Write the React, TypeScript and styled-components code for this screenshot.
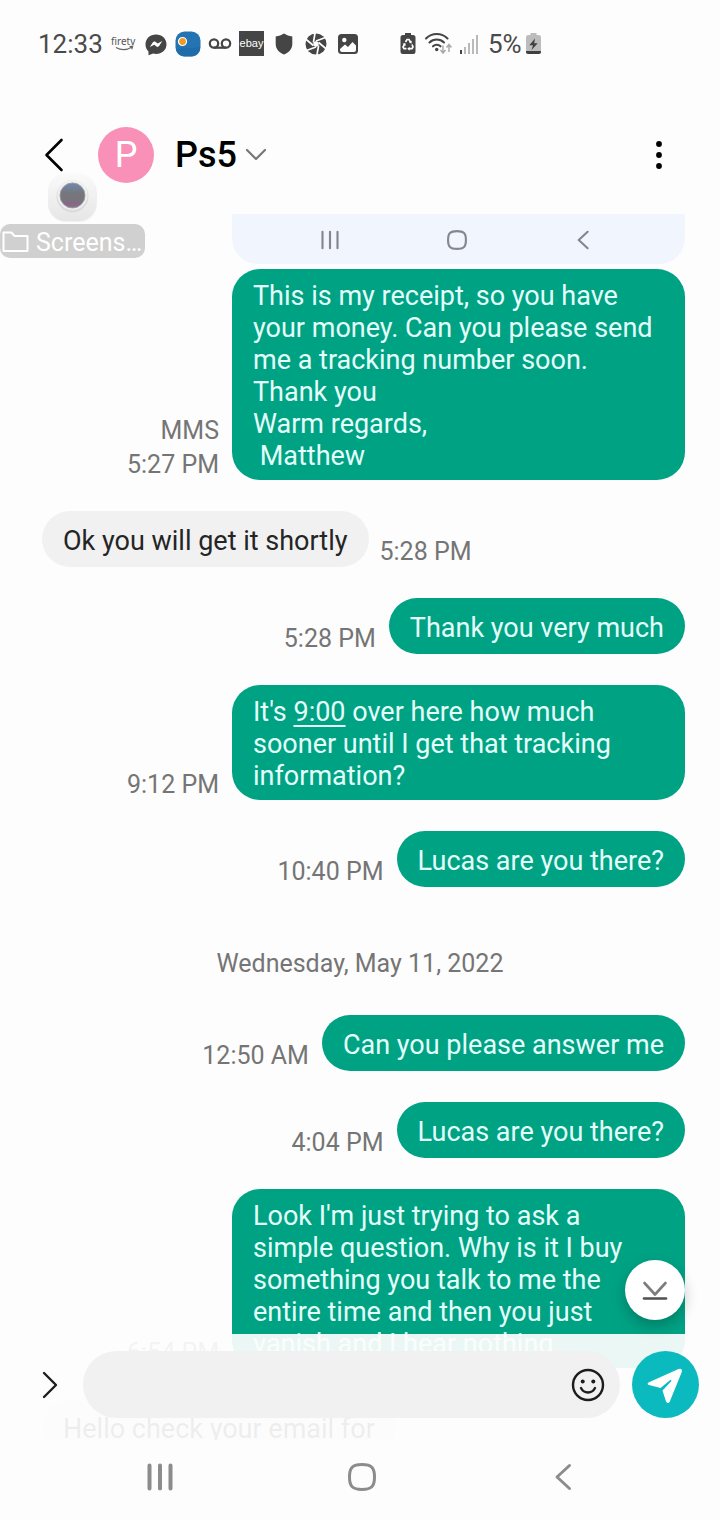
import React from "react";
import styled, { createGlobalStyle, css } from "styled-components";

const GlobalStyle = createGlobalStyle`
  *, *::before, *::after { box-sizing: border-box; }
  body { margin: 0; background: #fdfdfd; font-family: Roboto, "Noto Sans", sans-serif; }
  button { font: inherit; }
`;

const Screen = styled.div`
  position: relative;
  display: flex;
  flex-direction: column;
  height: 100vh;
  overflow: hidden;
  background: #fdfdfd;
  color: #000;
`;

const StatusBar = styled.div`
  flex: none;
  display: flex;
  align-items: center;
  height: 88px;
  padding: 0 38px;
  color: #4a4a4a;
`;

const Clock = styled.time`
  width: 74px;
  font-size: 26px;
  line-height: 32px;
`;

const Notifications = styled.div`
  display: flex;
  gap: 8px;
  flex: none;
  width: 288px;
`;

const SystemIcons = styled.div`
  display: flex;
  align-items: center;
  gap: 8px;
`;

const Battery = styled.span`
  display: flex;
  align-items: center;
  gap: 4px;
  font-size: 26px;
  line-height: 32px;
`;

const Header = styled.header`
  flex: none;
  display: flex;
  align-items: center;
  height: 126px;
  padding: 8px 37px 0;
`;

const IconButton = styled.button<{ $width?: number }>`
  display: flex;
  flex: none;
  align-items: center;
  justify-content: center;
  width: ${(p) => p.$width ?? 44}px;
  height: 48px;
  padding: 0;
  border: 0;
  background: none;
  color: inherit;
  cursor: pointer;
`;

const Avatar = styled.div`
  display: flex;
  flex: none;
  align-items: center;
  justify-content: center;
  width: 56px;
  height: 56px;
  margin: 0 21px 0 24px;
  border-radius: 50%;
  background: #f890b7;
  color: #fff;
  font-size: 36px;
`;

const Title = styled.h1`
  margin: 0;
  font-size: 36px;
  line-height: 44px;
  font-weight: 500;
`;

const Spacer = styled.div`
  flex: 1;
`;

const Conversation = styled.main`
  position: relative;
  flex: 1;
  min-height: 0;
  overflow: hidden;
`;

const Thread = styled.div`
  display: flex;
  flex-direction: column;
  gap: 31px;
  padding: 0 35px 0 42px;
`;

const Attachment = styled.div`
  display: flex;
  align-items: center;
  justify-content: space-between;
  align-self: flex-end;
  width: 453px;
  max-width: 100%;
  height: 50px;
  margin-bottom: -26px;
  padding: 2px 92px 0 88px;
  border-radius: 0 0 26px 26px;
  background: #f1f5fe;
  color: #85878e;
`;

const MessageRow = styled.div<{ $sent: boolean }>`
  display: flex;
  align-items: flex-end;
  flex-direction: ${(p) => (p.$sent ? "row-reverse" : "row")};
  gap: ${(p) => (p.$sent ? 13 : 11)}px;
`;

const Bubble = styled.p<{ $sent: boolean }>`
  display: flex;
  align-items: center;
  max-width: 453px;
  min-height: 56px;
  margin: 0;
  padding: 11px 21px 8px;
  border-radius: 28px;
  font-size: 27px;
  line-height: 32px;
  white-space: pre-wrap;
  ${(p) =>
    p.$sent
      ? css`
          background: #00a284;
          color: #e4fffa;
        `
      : css`
          background: #f1f1f1;
          color: #252525;
        `}
`;

const TimeLink = styled.a`
  color: inherit;
  text-decoration: underline;
  text-decoration-thickness: 2px;
  text-underline-offset: 4px;
`;

const Meta = styled.span<{ $sent: boolean }>`
  flex: none;
  margin-bottom: -2px;
  font-size: 25px;
  line-height: 34px;
  color: #757575;
  text-align: ${(p) => (p.$sent ? "right" : "left")};
  white-space: pre-line;
`;

const DateDivider = styled.div`
  padding-top: 26px;
  margin-right: 7px;
  align-self: center;
  font-size: 25px;
  line-height: 32px;
  height: 66px;
  display: flex;
  align-items: center;
  color: #757575;
`;

const Composer = styled.form`
  position: absolute;
  right: 0;
  bottom: 0;
  left: 0;
  display: flex;
  align-items: flex-start;
  height: 106px;
  padding: 17px 21px 0 28px;
  background: rgba(253, 253, 253, 0.93);
  color: #1d1d1d;
`;

const ExpandButton = styled(IconButton)`
  height: 67px;
  margin-right: 11px;
`;

const Field = styled.div`
  display: flex;
  flex: 1;
  align-items: center;
  min-width: 0;
  height: 67px;
  margin-right: 12px;
  padding: 0 10px 0 32px;
  border-radius: 34px;
  background: #f1f1f1;
`;

const TextInput = styled.input`
  flex: 1;
  min-width: 0;
  border: 0;
  outline: 0;
  background: none;
  font: 27px/32px Roboto, sans-serif;
`;

const SendButton = styled.button`
  display: flex;
  flex: none;
  align-items: center;
  justify-content: center;
  width: 67px;
  height: 67px;
  padding: 0;
  border: 0;
  border-radius: 50%;
  background: #0bbabe;
  cursor: pointer;
`;

const JumpButton = styled.button`
  position: absolute;
  right: 35px;
  bottom: 120px;
  display: flex;
  align-items: center;
  justify-content: center;
  width: 60px;
  height: 60px;
  padding: 0;
  border: 0;
  border-radius: 50%;
  background: #fff;
  box-shadow: 0 6px 14px rgba(0, 0, 0, 0.22);
  cursor: pointer;
`;

const SystemNav = styled.nav`
  flex: none;
  display: flex;
  align-items: center;
  justify-content: space-between;
  height: 80px;
  padding: 0 135px 7px 138px;
  color: #8c8c8c;
`;

const DragPreview = styled.div`
  position: absolute;
  top: 172px;
  left: 0;
`;

const CameraTile = styled.div`
  width: 60px;
  height: 52px;
  margin-left: 42px;
`;

const FolderLabel = styled.div`
  display: flex;
  align-items: center;
  gap: 6px;
  width: 145px;
  height: 34px;
  padding: 3px 2px 0;
  border-radius: 10px;
  background: #d0d0d0;
  color: #fff;
  font-size: 25px;
  line-height: 32px;
`;

const line = {
  fill: "none",
  stroke: "currentColor",
  strokeLinecap: "round",
  strokeLinejoin: "round",
} as const;

const Recents = ({ size, weight }: { size: number; weight: number }) => (
  <svg width={size} height={size} viewBox="0 0 28 28" {...line} strokeWidth={weight}>
    <path d="M3.500 2.500v23M14 2.500v23M24.500 2.500v23" />
  </svg>
);

const Home = ({ size, weight }: { size: number; weight: number }) => (
  <svg width={size} height={size} viewBox="0 0 28 28" {...line} strokeWidth={weight}>
    <path d="M14 1.500C23.500 1.500 26.500 4.500 26.500 14S23.500 26.500 14 26.500 1.500 23.500 1.500 14 4.500 1.500 14 1.500Z" />
  </svg>
);

const Back = ({ size, weight }: { size: number; weight: number }) => (
  <svg width={size} height={size} viewBox="0 0 28 28" {...line} strokeWidth={weight}>
    <path d="M20.500 2.500 8 14l12.500 11.500" />
  </svg>
);

const FireTv = () => (
  <svg width="24" height="24" viewBox="0 0 24 24" overflow="visible">
    <text x="-1" y="13" fontSize="10" fontFamily="Noto Sans, sans-serif" fill="#555">firetv</text>
    <path d="M4 15.500q8 4.500 16-.5M17.500 14.500l3.200-.3-1 3" fill="none" stroke="#666" strokeWidth="1.200" />
  </svg>
);

const Messenger = () => (
  <svg width="24" height="24" viewBox="0 0 24 24" fill="#454545">
    <path d="M12 2.500c6 0 10.500 4.200 10.500 9.800S18 22 12 22c-1 0-2-.1-2.900-.4L4.500 23.300v-3.700c-2-1.800-3-4.300-3-7.300 0-5.600 4.500-9.800 10.500-9.800Z" />
    <path d="m5.800 15 3.100-4.800c.6-.9 1.700-1 2.500-.4l2.300 1.800 4.600-2.500-3.200 5c-.6.900-1.800 1.100-2.600.4l-2.200-1.800Z" fill="#fff" />
  </svg>
);

const PhotoApp = () => (
  <svg width="24" height="24" viewBox="0 0 24 24" overflow="visible">
    <rect x="-.5" y="-.5" width="25" height="25" rx="9" fill="#2474b3" />
    <path d="M0 17c4 0 7-2 13-1s8-2 11-1v2c-1 5-4 7.500-9 7.500H9c-5 0-8-2.500-9-7.500Z" fill="#1d68a5" opacity=".6" />
    <circle cx="6.500" cy="9.500" r="4" fill="#f09a27" stroke="#fff" strokeWidth="1.200" />
  </svg>
);

const Voicemail = () => (
  <svg width="24" height="24" viewBox="0 0 24 24" fill="none" stroke="#454545" strokeWidth="2.200">
    <circle cx="6" cy="11.500" r="4.200" />
    <circle cx="18" cy="11.500" r="4.200" />
    <path d="M6 15.700h12" />
  </svg>
);

const Ebay = () => (
  <svg width="24" height="24" viewBox="0 0 24 24" overflow="visible">
    <rect x="-1" y="-1" width="25" height="25" fill="#454545" />
    <text x="11.500" y="14.500" textAnchor="middle" fontSize="11" fontFamily="Liberation Sans, sans-serif" fill="#fff">ebay</text>
  </svg>
);

const Shield = () => (
  <svg width="24" height="24" viewBox="0 0 24 24" fill="#454545">
    <path d="M12 1.500c2.500 1.500 5.200 2.500 8.300 3v7.500c0 5-3.500 8.700-8.300 10.500-4.800-1.800-8.300-5.500-8.300-10.500V4.500c3.100-.5 5.800-1.500 8.300-3Z" />
  </svg>
);

const Aperture = () => (
  <svg width="24" height="24" viewBox="0 0 24 24">
    <circle cx="12" cy="12" r="10.500" fill="#454545" />
    <path d="m12 9 2.600 1.500v3L12 15l-2.600-1.500v-3Z" fill="#fdfdfd" />
    <g stroke="#fdfdfd" strokeWidth="1.700">
      {[0, 60, 120, 180, 240, 300].map((a) => (
        <path key={a} d="M12 9 21.500 5.500" transform={`rotate(${a} 12 12)`} />
      ))}
    </g>
  </svg>
);

const Picture = () => (
  <svg width="24" height="24" viewBox="0 0 24 24">
    <rect x="2" y="2" width="20" height="20" rx="3.500" fill="#454545" />
    <circle cx="8.300" cy="8" r="2.200" fill="#fff" />
    <path d="m4 17 5-4.500 3 2.500 4.500-5L20 13.500V18a2 2 0 0 1-2 2H6a2 2 0 0 1-2-2Z" fill="#fff" />
  </svg>
);

const BatterySaver = () => (
  <svg width="16" height="24" viewBox="0 0 16 24">
    <path d="M5 1h6v2h2a2.500 2.500 0 0 1 2.500 2.500v14A2.500 2.500 0 0 1 13 22H3A2.500 2.500 0 0 1 .5 19.500v-14A2.500 2.500 0 0 1 3 3h2Z" fill="#454545" />
    <g fill="none" stroke="#fff" strokeWidth="1.700">
      <path d="m5.500 10 1.500-2.500h2l1.800 3M12 12.500l1 2.500-1 1.700H8.800M6.500 16.700H4L3 15l1.700-3" />
    </g>
    <path d="m11.700 8.700-.2 3-2.500-1.500ZM9.600 14.700v4l-2.300-2ZM2.500 11.800l2.800-.8.500 3Z" fill="#fff" />
  </svg>
);

const Wifi = () => (
  <svg width="28" height="24" viewBox="0 0 28 24">
    <g fill="none" stroke="#454545" strokeWidth="2.100" strokeLinecap="round">
      <path d="M2 6.500c6-6 15.500-6 21.500 0M5.500 10.500c4-4 10.500-4 14.500 0M9 14.300c2.200-2 5.300-2 7.500 0" />
    </g>
    <circle cx="12.700" cy="17.500" r="1.700" fill="#454545" />
    <path d="M19 13.500v7M16.500 18l2.500 3 2.500-3M25 20v-7M22.500 15.500l2.500-3 2.500 3" fill="none" stroke="#aaa" strokeWidth="1.500" />
  </svg>
);

const Signal = () => (
  <svg width="20" height="24" viewBox="0 0 20 24" fill="#bababa">
    <path d="M0 18h2v4H0z" fill="#454545" />
    <path d="M4 15h2v7H4zM8 11h2v11H8zM12 7h2v15h-2zM16 3h2v19h-2z" />
  </svg>
);

const Charging = () => (
  <svg width="16" height="24" viewBox="0 0 16 24">
    <path d="M4.500 1h6v2h2A2.500 2.500 0 0 1 15 5.500v14a2.500 2.500 0 0 1-2.500 2.500h-10A2.500 2.500 0 0 1 0 19.500v-14A2.500 2.500 0 0 1 2.500 3h2Z" fill="#bcbcbc" />
    <path d="M0 19h15v.5a2.500 2.500 0 0 1-2.500 2.500h-10A2.500 2.500 0 0 1 0 19.500ZM9 6.500l-5.700 6.700H7L5.500 18l6.200-6.700H8.200Z" fill="#3f3f3f" />
  </svg>
);

const Camera = () => (
  <svg width="60" height="56" viewBox="0 0 60 56">
    <defs>
      <linearGradient id="tile" x1="0" y1="0" x2="0" y2="1">
        <stop offset="0" stopColor="#fafafa" />
        <stop offset="1" stopColor="#e6e6e6" />
      </linearGradient>
      <linearGradient id="lens" x1="0" y1="0" x2="0" y2="1">
        <stop offset="0" stopColor="#7188b2" />
        <stop offset=".4" stopColor="#75777c" />
        <stop offset=".65" stopColor="#77757c" />
        <stop offset=".85" stopColor="#8b6589" />
        <stop offset="1" stopColor="#827b83" />
      </linearGradient>
    </defs>
    <rect x="6" y="3" width="49" height="47" rx="18" fill="#000" opacity=".05" />
    <rect x="6" y="1" width="48" height="48" rx="18" fill="url(#tile)" />
    <circle cx="30.500" cy="24.500" r="16" fill="#dcdcdc" />
    <circle cx="30.500" cy="23" r="15" fill="#f0f0f0" />
    <circle cx="30.500" cy="23.500" r="12.500" fill="url(#lens)" stroke="#999ba0" strokeWidth="1" />
  </svg>
);

type Message = { sent: boolean; meta?: string; body: React.ReactNode };
type Entry = Message | { date: string };

const entries: Entry[] = [
  {
    sent: true,
    meta: "MMS\n5:27 PM",
    body: "This is my receipt, so you have your money. Can you please send me a tracking number soon.\nThank you\nWarm regards,\n Matthew",
  },
  { sent: false, meta: "5:28 PM", body: "Ok you will get it shortly" },
  { sent: true, meta: "5:28 PM", body: "Thank you very much" },
  {
    sent: true,
    meta: "9:12 PM",
    body: (
      <>
        It's <TimeLink href="#time">9:00</TimeLink> over here how much sooner until I get that tracking information?
      </>
    ),
  },
  { sent: true, meta: "10:40 PM", body: "Lucas are you there?" },
  { date: "Wednesday, May 11, 2022" },
  { sent: true, meta: "12:50 AM", body: "Can you please answer me" },
  { sent: true, meta: "4:04 PM", body: "Lucas are you there?" },
  {
    sent: true,
    meta: "6:54 PM",
    body: "Look I'm just trying to ask a simple question. Why is it I buy something you talk to me the entire time and then you just vanish and I hear nothing",
  },
  { sent: false, body: "Hello check your email for" },
];

export default function App() {
  return (
    <Screen>
      <GlobalStyle />
      <StatusBar>
        <Clock>12:33</Clock>
        <Notifications>
          <FireTv />
          <Messenger />
          <PhotoApp />
          <Voicemail />
          <Ebay />
          <Shield />
          <Aperture />
          <Picture />
        </Notifications>
        <SystemIcons>
          <BatterySaver />
          <Wifi />
          <Signal />
          <Battery>
            5%
            <Charging />
          </Battery>
        </SystemIcons>
      </StatusBar>

      <Header>
        <IconButton $width={37} aria-label="Back">
          <svg width="24" height="36" viewBox="0 0 24 36" {...line} strokeWidth="2.600">
            <path d="M17.500 3 2.500 18l15 15" />
          </svg>
        </IconButton>
        <Avatar>P</Avatar>
        <Title>Ps5</Title>
        <IconButton $width={38} aria-label="Contact details">
          <svg width="22" height="16" viewBox="0 0 22 16" {...line} stroke="#777" strokeWidth="2.200">
            <path d="m2 3 9 9 9-9" />
          </svg>
        </IconButton>
        <Spacer />
        <IconButton $width={48} aria-label="More options">
          <svg width="8" height="30" viewBox="0 0 8 30">
            <circle cx="4" cy="4" r="2.900" />
            <circle cx="4" cy="15" r="2.900" />
            <circle cx="4" cy="26" r="2.900" />
          </svg>
        </IconButton>
      </Header>

      <Conversation>
        <Thread>
          <Attachment>
            <Recents size={20} weight={3} />
            <Home size={20} weight={3} />
            <Back size={20} weight={3} />
          </Attachment>
          {entries.map((entry, i) =>
            "date" in entry ? (
              <DateDivider key={i}>{entry.date}</DateDivider>
            ) : (
              <MessageRow key={i} $sent={entry.sent}>
                <Bubble $sent={entry.sent}>
                  <span>{entry.body}</span>
                </Bubble>
                {entry.meta && <Meta $sent={entry.sent}>{entry.meta}</Meta>}
              </MessageRow>
            ),
          )}
        </Thread>
        <Composer onSubmit={(e) => e.preventDefault()}>
          <ExpandButton type="button" aria-label="Show attachments">
            <svg width="20" height="30" viewBox="0 0 20 30" {...line} strokeWidth="2.400">
              <path d="m4 3 12 12L4 27" />
            </svg>
          </ExpandButton>
          <Field>
            <TextInput aria-label="Message" />
            <IconButton type="button" aria-label="Emoji">
              <svg width="34" height="34" viewBox="0 0 34 34" {...line} strokeWidth="2.400">
                <circle cx="17" cy="17" r="15" />
                <path d="M10 20c3 6 11 6 14 0" />
                <circle cx="11.700" cy="13.500" r="2" fill="currentColor" stroke="none" />
                <circle cx="22.300" cy="13.500" r="2" fill="currentColor" stroke="none" />
              </svg>
            </IconButton>
          </Field>
          <SendButton aria-label="Send">
            <svg width="38" height="38" viewBox="0 0 38 38">
              <path
                d="M2 16.300 31.500 3.100q4-1.400 3.300 2.800L22.800 35.500q-1.500 3-3.700.2L15.500 24.500l8.700-9.200q.8-1.600-.9-1.200L13.500 22 2 19q-2.800-1.300 0-2.700Z"
                fill="#fff"
              />
            </svg>
          </SendButton>
        </Composer>
        <JumpButton aria-label="Jump to latest">
          <svg width="26" height="22" viewBox="0 0 26 22" {...line} stroke="#505050" strokeWidth="2.600">
            <path d="m2.500 4 10.500 11.500L23.500 4" stroke="#7c7c7c" />
            <path d="M2 19.500h22" />
          </svg>
        </JumpButton>
      </Conversation>

      <SystemNav>
        <IconButton aria-label="Recent apps">
          <Recents size={28} weight={4} />
        </IconButton>
        <IconButton aria-label="Home">
          <Home size={28} weight={3} />
        </IconButton>
        <IconButton aria-label="Go back">
          <Back size={28} weight={3} />
        </IconButton>
      </SystemNav>

      <DragPreview>
        <CameraTile>
          <Camera />
        </CameraTile>
        <FolderLabel>
          <svg width="28" height="24" viewBox="0 0 28 24" {...line} strokeWidth="2">
            <path d="M1.500 20V1.500h8l3 3.500h13v15Z" />
          </svg>
          Screens…
        </FolderLabel>
      </DragPreview>
    </Screen>
  );
}
